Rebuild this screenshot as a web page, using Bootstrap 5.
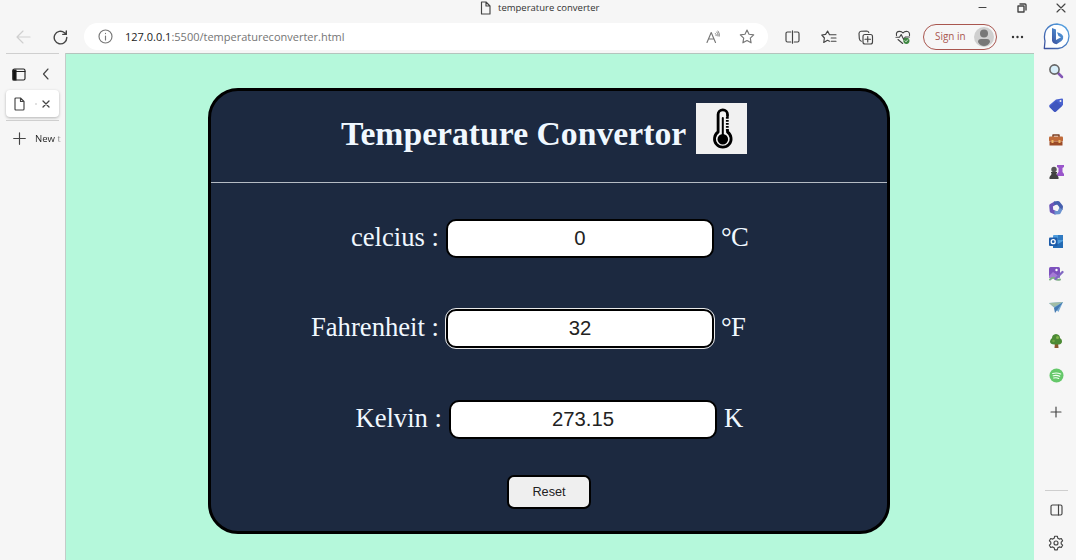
<!DOCTYPE html>
<html lang="en">
<head>
<meta charset="utf-8">
<meta name="viewport" content="width=device-width, initial-scale=1">
<title>temperature converter</title>
<link href="https://cdn.jsdelivr.net/npm/bootstrap@5.3.0/dist/css/bootstrap.min.css" rel="stylesheet">
<style>
body{background:#f6f6f6;font-family:"Open Sans","Noto Sans",sans-serif;font-size:11px;line-height:1;color:#333}
svg{display:block;fill:none;stroke:#444;stroke-width:1.15;stroke-linecap:round;stroke-linejoin:round;flex:none}
.win{width:1076px;height:560px}
.titlebar{height:20px}
.pagetitle{margin-left:480px;width:486px;font-size:9.5px;padding-bottom:4px;gap:7px}
.wbtn{width:39px;padding-bottom:5px;flex:none}
.toolbar{height:33px;padding-left:5px}
.tool{width:37px;padding-top:1px}
.address{width:684px;height:27px;background:#fff;margin:0 5.5px 0 5px;padding:0 13px 0 14px}
.url{font-size:11px;color:#757575;margin-left:12px}
.url b{color:#222;font-weight:400}
.signin{width:74px;height:26px;border:1px solid #a9564f;color:#a9564f;font-size:9.9px;margin-left:1.5px;padding:0 2px 0 11px}
.tabs-side{width:66px;border-right:1px solid #c3ccc8;padding-left:6px}
.tabs-side .rule{width:53px;height:1px;background:#cfcfcf}
.tabcell{width:53px;height:27px;background:#fff;box-shadow:0 1px 3px #0004;padding:0 9px 0 8px}
.newtab{font-size:9.6px;width:29px;white-space:nowrap;background:linear-gradient(90deg,#222 70%,#ccc 90%);background-clip:text;-webkit-background-clip:text;-webkit-text-fill-color:transparent;line-height:14px}
.viewport{width:968px;background:#b5f8db;border-top:1px solid #b4c4bd;padding:34px 0 0 142px}
.converter{width:682px;height:446px;border:3px solid #000;border-radius:30px;background:#1c2940;color:#f0f8ff;font-family:"Liberation Serif",serif;font-size:26.67px}
.converter header{height:92px;border-bottom:1px solid #b5bbc4;padding:12px 0 0 130px;gap:9px}
.converter h1{font-size:33.7px;font-weight:700;line-height:38px;margin:12px 0 0;white-space:nowrap;width:346px}
.thermo{width:51px;height:51px;background:#f1f1f1}
.field-row{height:39px;gap:6px}
.field-row label{width:229px;text-align:right;line-height:30px;padding:0 1px 3px 0;white-space:pre}
.field-row span{line-height:30px;padding-bottom:3px;padding-left:1px;letter-spacing:-.7px}
.field-row input{width:268px;height:39px;border:2px solid #000;border-radius:10px;background:#fff;text-align:center;font:20.3px "Liberation Sans",sans-serif;color:#222;padding:0 2px}
.field-row input.active{outline:1.5px solid #e8e8e8;outline-offset:0}
.reset{width:84px;height:34px;border:2px solid #000;border-radius:7px;background:#efefef;color:#222;font:12.7px "Liberation Sans",sans-serif;margin:36px 0 0 296px;padding:0}
.apps{width:42px;padding:1px 0 0 2px}
.app{height:33.8px;width:40px}
.apps .rule{width:23px;height:1px;background:#cecece}
</style>
</head>
<body>
<div class="win d-flex flex-column overflow-hidden">
  <div class="titlebar d-flex">
    <div class="pagetitle d-flex align-items-center flex-shrink-0">
      <svg width="11" height="14" viewBox="0 0 11 14"><path d="M1.5 1H6l4 4v8H1.5zM6 1v4h4"/></svg><span>temperature converter</span>
    </div>
    <div class="wbtn d-flex justify-content-center align-items-center" style="margin-left:-3px"><svg width="9" height="9" viewBox="0 0 9 9"><path d="M1 4.5h7"/></svg></div>
    <div class="wbtn d-flex justify-content-center align-items-center"><svg width="10" height="10" viewBox="0 0 10 10"><path d="M1 3h6v6H1zM3 1h5q1 0 1 1v5" stroke-width="1.4"/></svg></div>
    <div class="wbtn d-flex justify-content-center align-items-center"><svg width="10" height="10" viewBox="0 0 10 10"><path d="M1 1l8 8M9 1l-8 8"/></svg></div>
  </div>
  <nav class="toolbar d-flex align-items-center">
    <div class="tool d-flex justify-content-center"><svg width="15" height="14" viewBox="0 0 15 14" style="stroke:#cfcfcf"><path d="M14 7H1m6-6L1 7l6 6"/></svg></div>
    <div class="tool d-flex justify-content-center"><svg width="15" height="15" viewBox="0 0 15 15" style="stroke-width:1.4"><path d="M13.8 7.5A6.3 6.3 0 1 1 11.5 2.7L13 4M13.3 1v3.4H9.8"/></svg></div>
    <div class="address rounded-pill d-flex align-items-center">
      <svg width="15" height="15" viewBox="0 0 15 15" style="stroke:#777"><circle cx="7.5" cy="7.5" r="6.5"/><path d="M7.5 7v4M7.5 4.4v.2"/></svg>
      <div class="url"><b>127.0.0.1</b>:5500/temperatureconverter.html</div>
      <svg class="ms-auto" width="15" height="14" viewBox="0 0 15 14" style="stroke:#777"><path d="M1 12.5L5.2 2.5l4.3 10M2.500 9h5.600"/><path d="M9.500 3.500q1 .8.700 2.200M10.800 2q1.700 1.500 1.200 4M12 1q2 2.200 1.300 5.200" stroke-width=".9"/></svg>
      <svg style="stroke:#777;margin-left:18px" width="16" height="15" viewBox="0 0 16 15"><path d="M8 1l2 4.200 4.700.7-3.400 3.300.8 4.600L8 11.600l-4.100 2.200.8-4.600L1.300 5.900 6 5.200z"/></svg>
    </div>
    <div class="tool d-flex justify-content-center"><svg width="15" height="14" viewBox="0 0 15 14"><path d="M5.800 2H2.500Q1 2 1 3.500v7Q1 12 2.500 12h3.300M9.200 2h3.300Q14 2 14 3.500v7q0 1.500-1.500 1.500H9.200M7.500 .8v12.400"/></svg></div>
    <div class="tool d-flex justify-content-center"><svg width="16" height="15" viewBox="0 0 16 15"><path d="M8.500 11.200L6.500 10.300 2.700 12.500l.7-4.500L.8 5l3.800-.6 2-3.400 1.900 3.700H15M10.200 8H15M10.200 11.200H15"/></svg></div>
    <div class="tool d-flex justify-content-center"><svg width="16" height="15" viewBox="0 0 16 15"><rect x="5" y="4.500" width="9.500" height="9.500" rx="2"/><path d="M9.750 6.500v5.500M7 9.250h5.500M3.300 11.200Q1.500 10.500 1.300 8.500L1 3.500Q1 1.500 3 1.200L8.500 1q1.800 0 2.300 1.500"/></svg></div>
    <div class="tool d-flex justify-content-center"><svg width="16" height="15" viewBox="0 0 16 15"><path d="M1.500 5.500Q.8 1.300 4.500 1.300 6.700 1.300 8 3 9.300 1.300 11.500 1.300 15 1.600 14.500 5.500M1 7.200h3.500L6.200 4.500l2.500 5L10.200 7H14.500M3 9.500l4.700 4"/><circle cx="11.400" cy="10.800" r="3.100" fill="#3d8741" stroke="none"/><path d="M10 10.800l1 1 1.700-2" stroke="#fff" stroke-width=".8"/></svg></div>
    <div class="signin rounded-pill d-flex align-items-center justify-content-between"><span>Sign in</span><svg width="20" height="20" viewBox="0 0 20 20" style="stroke:none"><circle cx="10" cy="10" r="10" fill="#cfcfcf"/><circle cx="10" cy="6.500" r="4" fill="#777"/><path d="M4 15q0-3 3-3h6q3 0 3 3-2 4-6 4t-6-4z" fill="#777"/></svg></div>
    <div class="d-flex justify-content-center" style="width:40px"><svg width="13" height="4" viewBox="0 0 13 4" style="stroke:none;fill:#333"><circle cx="2" cy="2" r="1.200"/><circle cx="6.500" cy="2" r="1.200"/><circle cx="11" cy="2" r="1.200"/></svg></div>
    <div class="d-flex justify-content-center" style="width:39px"><svg width="27" height="27" viewBox="0 0 27 27"><defs><linearGradient id="bg" x1="0" y1="1" x2="1" y2="0"><stop stop-color="#3b4f9c"/><stop offset="1" stop-color="#55a9e8"/></linearGradient></defs><path d="M1.300 25.500L2 18Q.5 12 3 7 7 1 14 1q11 1 12 12-.5 11-11 12.500z" fill="#fdfeff" stroke="url(#bg)" stroke-width="1.300"/><path d="M9 5l4 1.500v10.500l5-2.800-2.500-1.200L14 9.300q5.500 1.500 6.200 4.300.5 3-1.700 4.400l-5 3.200q-4-.5-4.500-3.700z" fill="url(#bg)" stroke="none"/></svg></div>
  </nav>
  <div class="d-flex flex-fill">
    <aside class="tabs-side">
      <div class="rule"></div>
      <div class="d-flex align-items-center" style="height:40px;padding-left:6px;gap:16px">
        <svg width="14" height="13" viewBox="0 0 14 13" style="stroke:#222"><rect x="1" y="1" width="12" height="11" rx="1.500"/><path d="M1 3.500h12"/><path d="M1 2h3v10H1z" fill="#111"/></svg>
        <svg width="8" height="12" viewBox="0 0 8 12"><path d="M6 1L1.500 6 6 11"/></svg>
      </div>
      <div class="tabcell rounded-1 d-flex align-items-center justify-content-between" style="margin-top:-4px">
        <svg width="11" height="14" viewBox="0 0 11 14"><path d="M1 2q0-1 1-1h4.500L10 4.500V12q0 1-1 1H2q-1 0-1-1zM6.500 1v3.500H10"/></svg>
        <svg width="2" height="2" viewBox="0 0 2 2" style="stroke:none;fill:#bbb;margin-left:5px"><circle cx="1" cy="1" r=".8"/></svg>
        <svg width="8" height="8" viewBox="0 0 8 8" style="stroke-width:1.300"><path d="M1 1l6 6M7 1l-6 6"/></svg>
      </div>
      <div class="rule" style="margin-top:3px"></div>
      <div class="d-flex align-items-center" style="height:35px;padding-left:7px;gap:9px">
        <svg width="13" height="13" viewBox="0 0 13 13"><path d="M6.500 .7v11.600M.7 6.500h11.600"/></svg><span class="newtab overflow-hidden">New t</span>
      </div>
    </aside>
    <main class="viewport">
      <section class="converter">
        <header class="d-flex align-items-start">
          <h1>Temperature Convertor</h1>
          <svg class="thermo" viewBox="0 0 51 51" style="stroke:#000;stroke-width:2.800"><path d="M22 28.500V11.500a4.800 4.800 0 0 1 9.600 0V28.500a9 9 0 1 1-9.600 0z" fill="#f4f4f4" stroke="none"/><path d="M31.500 13V11.500a4.700 4.700 0 0 0-9.400 0V29a8.300 8.300 0 1 0 9.400 0v-1.500"/><path d="M31.300 14v14" stroke-dasharray="1.800 1.200" stroke-linecap="butt"/><path d="M26.800 15v20" stroke-width="2"/><circle cx="26.800" cy="36.300" r="3.900" fill="#000"/></svg>
        </header>
        <div class="field-row d-flex align-items-center" style="margin-top:36px"><label for="c">celcius :</label><input id="c" value="0"><span>°C</span></div>
        <div class="field-row d-flex align-items-center" style="margin-top:51px"><label for="f">Fahrenheit :</label><input id="f" class="active" value="32"><span>°F</span></div>
        <div class="field-row d-flex align-items-center" style="margin-top:52px;padding-left:3px"><label for="k">Kelvin :</label><input id="k" value="273.15"><span>K</span></div>
        <button class="reset d-block" type="button">Reset</button>
      </section>
    </main>
    <aside class="apps d-flex flex-column align-items-center">
      <div class="app d-flex align-items-center justify-content-center"><svg width="16" height="16" viewBox="0 0 16 16"><path d="M10 10l4 4" stroke="#8357b5" stroke-width="2.500"/><circle cx="6.500" cy="6.500" r="4.600" fill="#d8eef9" stroke="#666" stroke-width="1.600"/></svg></div>
      <div class="app d-flex align-items-center justify-content-center"><svg width="16" height="16" viewBox="0 0 16 16" style="stroke:none"><path d="M8 2.500L14 1.500q1 0 1 1V8L8 14.500q-1 .8-2 0L1.500 10q-.8-1 0-2z" fill="#4a62cf"/><path d="M1.500 10L8 4l6 5-6 5.500q-1 .8-2 0z" fill="#3f56be"/><circle cx="12.500" cy="4" r="1" fill="#eee"/></svg></div>
      <div class="app d-flex align-items-center justify-content-center pt-1"><svg width="16" height="14" viewBox="0 0 16 14" style="stroke:none"><path d="M5 4V2h6v2" style="stroke:#7b3f23;stroke-width:1.500"/><rect x="1" y="3.500" width="14" height="5" rx="1" fill="#bf6a3a"/><path d="M1.500 8.500h13v4h-13z" fill="#9c4b27"/><path d="M3.500 7h2v3h-2zM10.500 7h2v3h-2z" fill="#f0b766"/></svg></div>
      <div class="app d-flex align-items-center justify-content-center"><svg width="17" height="16" viewBox="0 0 17 16" style="stroke:none"><path d="M9 1h7v2l-1.500 1v4L16 10v2H9v-2l1.500-2V4L9 3z" fill="#9a56cb"/><circle cx="6" cy="5.500" r="2.700" fill="#555"/><path d="M3 8h6v1.500H8L10.500 13v2H1.500v-2L4 9.500H3z" fill="#414141"/></svg></div>
      <div class="app d-flex align-items-center justify-content-center pt-1"><svg width="16" height="16" viewBox="0 0 16 16" style="stroke-width:3.600;stroke-linecap:butt"><path d="M8 13L3.500 11 3 5.500 7.500 3" stroke="#6c55b8"/><path d="M6 3.200l4-.5 3.200 4-.5 3" stroke="#455fae"/><path d="M13 8.500L11 12.500 6.500 12.800" stroke="#6a92cf"/></svg></div>
      <div class="app d-flex align-items-center justify-content-center pt-1"><svg width="16" height="15" viewBox="0 0 16 15" style="stroke:none"><rect x="5" y="1" width="10" height="13" rx="1" fill="#4f9ddd"/><path d="M5 7l5 3 5-3v7H5z" fill="#246bb4"/><path d="M10 1h5v5h-5z" fill="#2f7ac2"/><rect x="1" y="3.500" width="8.500" height="8.500" rx="1" fill="#1c5ba9"/><circle cx="5.200" cy="7.700" r="2" stroke="#fff" stroke-width="1.300"/></svg></div>
      <div class="app d-flex align-items-center justify-content-center"><svg width="16" height="16" viewBox="0 0 16 16"><rect x="1" y="1" width="11" height="11" rx="1.500" fill="#7d52bd" stroke="none"/><path d="M1 10l4-4 7 5v1H1z" fill="#a67ad6" stroke="none"/><circle cx="8.500" cy="4" r="1.200" fill="#fff" stroke="none"/><path d="M2 13.500q3-3 5-1t5 1" stroke="#7fae86" stroke-width="2"/><path d="M7.500 13L14.500 6" stroke="#8068c2" stroke-width="2.300"/></svg></div>
      <div class="app d-flex align-items-center justify-content-center"><svg width="16" height="14" viewBox="0 0 16 14" style="stroke:none"><path d="M1 3l14-1-4.500 10-4-4z" fill="#75a9d4"/><path d="M15 2L6 8l1 5z" fill="#4379b1"/><path d="M1 3l14-1-9 5z" fill="#a2bda5"/></svg></div>
      <div class="app d-flex align-items-center justify-content-center"><svg width="14" height="16" viewBox="0 0 14 16" style="stroke:none"><path d="M6 9h3l.5 6h-4z" fill="#8b572d"/><path d="M7 1q4 .5 4 4 2.500 1.500 2 4-.5 3-6 2.500Q1 12 1 8.500 1 6.500 3 5q0-3.500 4-4z" fill="#4c8a35"/><circle cx="8.500" cy="4.500" r="1.500" fill="#83b64b"/><circle cx="4.500" cy="8" r="1.300" fill="#6fa342"/></svg></div>
      <div class="app d-flex align-items-center justify-content-center"><svg width="15" height="15" viewBox="0 0 15 15"><circle cx="7.500" cy="7.500" r="7" fill="#65c86a" stroke="none"/><path d="M3.700 5.500q4-1.300 8 .5M4.200 7.800q3.500-1 6.500.5M4.700 10q3-.7 5 .4" stroke="#f3fff3"/></svg></div>
      <div class="app d-flex align-items-center justify-content-center" style="height:40px"><svg width="12" height="12" viewBox="0 0 12 12"><path d="M6 1v10M1 6h10"/></svg></div>
      <div class="rule" style="margin-top:58px"></div>
      <div class="app d-flex align-items-center justify-content-center pt-1" style="height:35px"><svg width="13" height="12" viewBox="0 0 13 12"><rect x="1" y="1" width="11" height="10" rx="1.500"/><path d="M8.500 1v10"/></svg></div>
      <div class="app d-flex align-items-center justify-content-center"><svg width="16" height="16" viewBox="0 0 16 16"><path d="M6.700 1.200h2.600l.5 2 1.500.9 2-.6L14.600 5.800 13.200 7.200v1.600l1.400 1.400-1.300 2.300-2-.6-1.500.9-.5 2H6.700l-.5-2-1.500-.9-2 .6-1.300-2.300L2.800 8.800V7.200L1.400 5.800l1.300-2.300 2 .6 1.500-.9z"/><circle cx="8" cy="8" r="2"/></svg></div>
    </aside>
  </div>
</div>
<script src="https://cdn.jsdelivr.net/npm/bootstrap@5.3.0/dist/js/bootstrap.bundle.min.js"></script>
</body>
</html>
